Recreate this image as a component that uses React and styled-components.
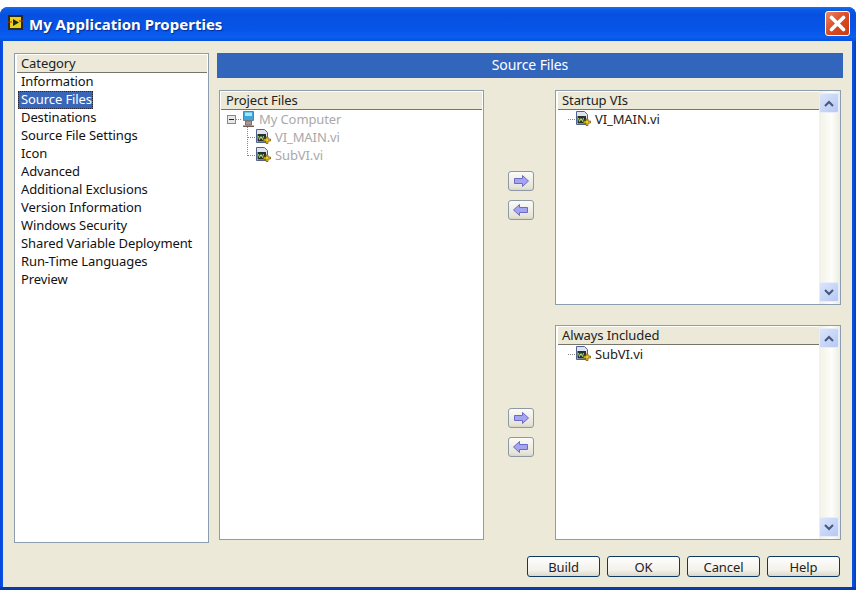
import React from 'react';
import styled, { createGlobalStyle } from 'styled-components';

const Global = createGlobalStyle`
  html, body { margin: 0; padding: 0; background: #fff; }
  body { width: 862px; height: 598px; overflow: hidden; font-family: "Noto Sans", "DejaVu Sans", sans-serif; letter-spacing: -0.1px; }
`;
const Window = styled.div`
  margin-top: 7px; width: 856px; height: 583px; box-sizing: border-box;
  border-radius: 8px 8px 0 0; overflow: hidden;
  background: linear-gradient(90deg, #0a45d8 0, #0855e6 3px, #0855e6 852px, #0a3cb8 856px);
  display: flex; flex-direction: column;
  border-bottom: 3px solid #0a3aa8;
`;
const TitleBar = styled.div`
  height: 34px; flex: none; display: flex; align-items: center;
  padding: 0 4px 0 7px; gap: 5px;
  background: linear-gradient(180deg, #1a6ef0 0, #0a5ae6 3px, #0650e0 8px, #0656ea 24px, #0a5ef0 30px, #0650d8 34px);
`;
const TitleText = styled.div`
  flex: 1; color: #fff; font: bold 15px "Noto Sans", sans-serif; letter-spacing: 0px;
  text-shadow: 1px 1px 1px #0a2a90;
`;
const CloseBtn = styled.div`
  width: 25px; height: 25px; margin: 0 2px 2px 0; box-sizing: border-box; border-radius: 3px;
  border: 1px solid #fff; background: linear-gradient(135deg, #e88a6c, #dc4a20 50%, #c83c14);
  display: flex; align-items: center; justify-content: center;
`;
const Body = styled.div`
  flex: 1; margin: 0 4px 0 3px; background: #ece9d8; padding: 12px 9px 0 11px;
  display: grid; grid-template-columns: 195px 626px; column-gap: 8px; grid-template-rows: 490px auto;
  box-sizing: border-box;
`;
const Panel = styled.div`
  background: #fff; border: 1px solid #8b9dae; box-sizing: border-box; display: flex; min-height: 0; position: relative;
`;
const CategoryPanel = styled(Panel)`
  flex-direction: column; padding: 1px;
`;
const Header = styled.div`
  height: 17px; flex: none; background: #ece9d8; border-bottom: 1px solid #77756a;
  font-size: 13px; line-height: 17px; color: #222; padding-left: 4px;
`;
const CatHeader = styled(Header)`margin: 0 0 0 1px;`;
const ProjectHeader = styled(Header)`padding-left: 5px;`;
const CatList = styled.div`padding: 0 0 0 2px; display: flex; flex-direction: column;`;
const CatItem = styled.div`
  height: 18px; line-height: 17px; font-size: 13px; color: ${p => p.$sel ? '#fff' : '#111'};
  align-self: flex-start; padding: 0 1px 0 3px; background: ${p => p.$sel ? '#3a66b8' : 'transparent'};
  outline: ${p => p.$sel ? '1px dotted #223' : 'none'}; outline-offset: -1px; white-space: nowrap;
`;
const Right = styled.div`display: flex; flex-direction: column; min-height: 0;`;
const Banner = styled.div`
  height: 25px; flex: none; background: #3266bc; color: #fff; font-size: 14px; line-height: 24px; text-align: center;
`;
const Files = styled.div`
  margin: 12px 0 0 2px; height: 450px; display: grid;
  grid-template-columns: 265px 71px 286px; 
`;
const Pane = styled(Panel)`flex-direction: column; padding: 1px;`;
const Movers = styled.div`display: grid; grid-template-rows: 215px 20px 215px;`;
const MoverGroup = styled.div`
  display: flex; flex-direction: column; align-items: center; gap: 9px;
  padding: ${p => p.$top}px 0 0 3px;
`;
const MoverBtn = styled.div`
  width: 26px; height: 20px; box-sizing: border-box; border: 1px solid #8d9aa2; border-radius: 3px;
  background: linear-gradient(180deg, #fbfbf8, #e6e4d8 85%, #d8d5c6);
  display: flex; align-items: center; justify-content: center;
`;
const Stack = styled.div`display: grid; grid-template-rows: 215px 215px; row-gap: 20px;`;
const ListPane = styled(Panel)`padding: 0;`;
const ListMain = styled.div`flex: 1; display: flex; flex-direction: column; padding: 1px 0 0 2px; min-width: 0;`;
const ScrollBar = styled.div`
  width: 21px; flex: none; display: flex; flex-direction: column; justify-content: space-between;
  padding: 2px 1px 2px 0; box-sizing: border-box;
  background: linear-gradient(90deg, #f3f1e6, #fdfdfa 60%, #eeece0);
`;
const ScrollBtn = styled.div`
  width: 20px; height: 20px; box-sizing: border-box; border: 1px solid #e8edf8; border-radius: 2px;
  background: linear-gradient(135deg, #dbe5fb, #b6c8f4); display: flex; align-items: center; justify-content: center;
`;
const Row = styled.div`
  height: 18px; display: flex; align-items: center; font-size: 13px; white-space: nowrap;
  color: ${p => p.$dim ? '#a9a9a9' : '#222'}; padding-left: ${p => p.$indent}px;
`;
const Label = styled.span`margin-left: ${p => p.$gap ?? 4}px;`;
const Dots = styled.span`
  width: ${p => p.$w}px; height: 1px; flex: none; align-self: center;
  background: repeating-linear-gradient(90deg, #888 0 1px, transparent 1px 2px);
`;
const Elbow = styled.span`
  position: absolute; left: 27px; top: 36px; width: 1px; height: 29px;
  background: repeating-linear-gradient(180deg, #888 0 1px, transparent 1px 2px);
`;
const Footer = styled.div`
  grid-column: 1 / 3; display: flex; justify-content: flex-end; gap: 7px; padding: 13px 3px 0 0;
`;
const Button = styled.div`
  width: 73px; height: 21px; box-sizing: border-box; border: 1px solid #0c3a64; border-radius: 3px;
  background: linear-gradient(180deg, #fefefe, #f2f1ea 70%, #dcd8c8);
  font-size: 13px; line-height: 20px; text-align: center; color: #222;
`;

const Vi = () => (
  <svg width="16" height="16" viewBox="0 0 16 16" style={{ flex: 'none' }}>
    <path d="M1.500.5h8l3 3v10h-11z" fill="#dfe3f0" stroke="#52628c" />
    <rect x="2.500" y="5" width="8.500" height="7.500" fill="#27302a" />
    <path d="M3.500 7l1 3.500 1.500-3 1.500 3 1-3.500" fill="none" stroke="#a8e070" strokeWidth="1" />
    <path d="M11 8h2v2h2.500v2H13v2.500h-2V12H8.500v-2H11z" fill="#f4cc1c" stroke="#7a5c08" strokeWidth=".8" />
  </svg>
);
const Computer = () => (
  <svg width="16" height="18" viewBox="0 0 16 18" style={{ flex: 'none' }}>
    <path d="M2.500 1.500h10v9h-10z" fill="#3fa6d8" stroke="#6c7c98" />
    <path d="M4 2.500h7v3.500H4z" fill="#a8e4f4" />
    <path d="M4.500 11h6v4h-6z" fill="#a89a90" stroke="#80706c" />
    <path d="M2 15.500h11v1.500H2z" fill="#7a5a54" />
  </svg>
);
const Arrow = ({ left }) => (
  <svg width="16" height="12" viewBox="0 0 16 12" style={left ? { transform: 'scaleX(-1)' } : undefined}>
    <path d="M1.500 3.500h8v-3l6 5.500-6 5.500v-3h-8z" fill="#a4a4f0" stroke="#6a6ac8" />
  </svg>
);
const Chevron = ({ down }) => (
  <svg width="10" height="7" viewBox="0 0 10 7" style={down ? { transform: 'scaleY(-1)' } : undefined}>
    <path d="M1 6l4-4 4 4" fill="none" stroke="#46587a" strokeWidth="2" />
  </svg>
);
const Scroll = () => (
  <ScrollBar>
    <ScrollBtn><Chevron /></ScrollBtn>
    <ScrollBtn><Chevron down /></ScrollBtn>
  </ScrollBar>
);
const Expander = () => (
  <svg width="9" height="9" viewBox="0 0 9 9" style={{ flex: 'none' }}>
    <rect x=".5" y=".5" width="8" height="8" fill="#e8e8e8" stroke="#7c8ca0" />
    <path d="M2 4.500h5" stroke="#223" />
  </svg>
);

const categories = ['Information', 'Source Files', 'Destinations', 'Source File Settings', 'Icon', 'Advanced', 'Additional Exclusions', 'Version Information', 'Windows Security', 'Shared Variable Deployment', 'Run-Time Languages', 'Preview'];

const Target = ({ title, item }) => (
  <ListPane>
    <ListMain>
      <Header>{title}</Header>
      <Row $indent={10}><Dots $w={7} /><Vi /><Label>{item}</Label></Row>
    </ListMain>
    <Scroll />
  </ListPane>
);

export default function App() {
  return (
    <>
      <Global />
      <Window>
        <TitleBar>
          <svg width="17" height="17" viewBox="0 0 17 17" style={{ flex: 'none', marginBottom: 3 }}>
            <rect x="1" y="1" width="15" height="15" fill="#2a2a20" />
            <rect x="3" y="3" width="11" height="11" fill="#e8d020" />
            <path d="M6 5l6 3.500-6 3.500z" fill="#1c2a10" />
            <path d="M0 8h5M12 7h5" stroke="#c82020" />
          </svg>
          <TitleText>My Application Properties</TitleText>
          <CloseBtn>
            <svg width="17" height="17" viewBox="0 0 17 17"><path d="M2.500 2.500l12 12M14.500 2.500l-12 12" stroke="#fff" strokeWidth="3.600" strokeLinecap="round" /></svg>
          </CloseBtn>
        </TitleBar>
        <Body>
          <CategoryPanel>
            <CatHeader>Category</CatHeader>
            <CatList>
              {categories.map(c => <CatItem key={c} $sel={c === 'Source Files'}>{c}</CatItem>)}
            </CatList>
          </CategoryPanel>
          <Right>
            <Banner>Source Files</Banner>
            <Files>
              <Pane>
                <ProjectHeader>Project Files</ProjectHeader>
                <Row $dim $indent={6}><Expander /><Dots $w={5} /><Computer /><Label $gap={2}>My Computer</Label></Row>
                <Row $dim $indent={27}><Dots $w={7} /><Vi /><Label>VI_MAIN.vi</Label></Row>
                <Row $dim $indent={27}><Dots $w={7} /><Vi /><Label>SubVI.vi</Label></Row>
                <Elbow />
              </Pane>
              <Movers>
                <MoverGroup $top={81}>
                  <MoverBtn><Arrow /></MoverBtn>
                  <MoverBtn><Arrow left /></MoverBtn>
                </MoverGroup>
                <div />
                <MoverGroup $top={83}>
                  <MoverBtn><Arrow /></MoverBtn>
                  <MoverBtn><Arrow left /></MoverBtn>
                </MoverGroup>
              </Movers>
              <Stack>
                <Target title="Startup VIs" item="VI_MAIN.vi" />
                <Target title="Always Included" item="SubVI.vi" />
              </Stack>
            </Files>
          </Right>
          <Footer>
            <Button>Build</Button>
            <Button>OK</Button>
            <Button>Cancel</Button>
            <Button>Help</Button>
          </Footer>
        </Body>
      </Window>
    </>
  );
}
